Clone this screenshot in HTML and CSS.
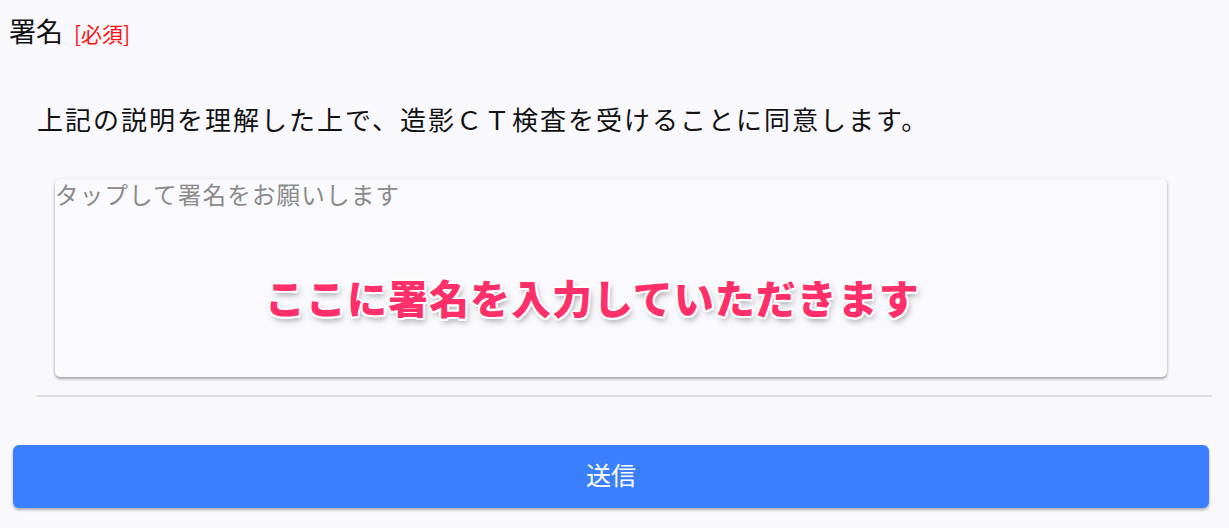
FILE: index.html
```html
<!DOCTYPE html>
<html lang="ja">
<head>
<meta charset="utf-8">
<link rel="stylesheet" href="styles.css">
</head>
<body>
<div class="field-label">署名<span class="required">[必須]</span></div>
<div class="consent">
  <p class="consent-text">上記の説明を理解した上で、造影ＣＴ検査を受けることに同意します。</p>
  <div class="sign-box">
    <div class="placeholder">タップして署名をお願いします</div>
    <div class="annotation">ここに署名を入力していただきます</div>
  </div>
  <hr class="divider">
</div>
<button class="submit">送信</button>
</body>
</html>
```
FILE: styles.css
```css
html, body {
  margin: 0;
  padding: 0;
  background: #f8f8fd;
}
body {
  font-family: "Noto Sans CJK JP", "Noto Sans", sans-serif;
  color: #111;
  width: 1229px;
  height: 528px;
  overflow: hidden;
}
.field-label {
  padding: 13px 0 0 9px;
  font-size: 27px;
  line-height: 36px;
  height: 36px;
}
.required {
  margin-left: 11px;
  color: #ff1010;
  font-size: 21px;
}
.consent {
  margin: 0 17px 0 37px;
}
.consent-text {
  margin: 0;
  padding-top: 49px;
  font-size: 26px;
  letter-spacing: 2px;
  line-height: 42px;
  height: 42px;
}
.sign-box {
  position: relative;
  margin: 39px 45px 0 18px;
  height: 198px;
  background: #f9f9fe;
  border-radius: 5px;
  box-shadow: 0 2px 3px rgba(0, 0, 0, 0.32), 0 0 4px rgba(0, 0, 0, 0.08);
}
.placeholder {
  font-size: 23.5px;
  line-height: 30px;
  color: #8a8a8a;
  letter-spacing: 1.2px;
}
.annotation {
  position: absolute;
  left: 210px;
  top: 90px;
  font-size: 40px;
  font-weight: 900;
  letter-spacing: 1px;
  line-height: 56px;
  color: #ff2f6a;
  white-space: nowrap;
  text-shadow:
    2px 0 0 #fff, -2px 0 0 #fff, 0 2px 0 #fff, 0 -2px 0 #fff,
    1.5px 1.5px 0 #fff, -1.5px 1.5px 0 #fff, 1.5px -1.5px 0 #fff, -1.5px -1.5px 0 #fff,
    2px 4px 6px rgba(0, 0, 0, 0.35);
}
.divider {
  margin: 18px 0 0 0;
  border: 0;
  height: 2px;
  background: #dddde2;
}
.submit {
  display: block;
  margin: 48px 20px 0 13px;
  padding: 0 0 6px 0;
  width: 1196px;
  height: 63px;
  border: 0;
  border-radius: 6px;
  background: #3a7fff;
  color: #fff;
  font-family: "Noto Sans CJK JP", "Noto Sans", sans-serif;
  font-size: 25px;
  box-shadow: 0 2px 3px rgba(0, 0, 0, 0.3);
}
```
